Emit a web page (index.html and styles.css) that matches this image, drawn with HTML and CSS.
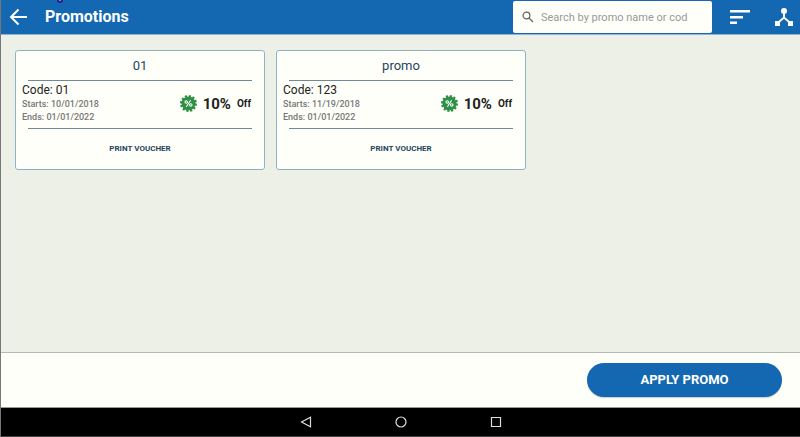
FILE: index.html
```html
<!DOCTYPE html>
<html lang="en">
<head>
    <meta charset="UTF-8">
    <meta name="viewport" content="width=device-width, initial-scale=1.0">
    <title>Promotions</title>
    <link rel="stylesheet" href="styles.css">
</head>
<body>
    <header class="topbar">
        <span class="marker"></span>
        <button class="icon-btn" type="button" aria-label="Back">
            <svg width="18" height="18" viewBox="0 0 18 18" fill="none" stroke="currentColor" stroke-width="2">
                <path d="M18 9H2M9.500 1.500L2 9l7.500 7.500"/>
            </svg>
        </button>
        <h1 class="title">Promotions</h1>
        <div class="search">
            <svg width="12" height="12" viewBox="0 0 12 12" fill="none" stroke="currentColor" stroke-width="1.300">
                <circle cx="4.500" cy="4.500" r="3.400"/>
                <path d="M7 7l4 4"/>
            </svg>
            <input type="text" aria-label="Search" placeholder="Search by promo name or code">
        </div>
        <button class="icon-btn sort" type="button" aria-label="Sort">
            <svg width="20" height="14" viewBox="0 0 20 14" fill="currentColor">
                <path d="M0 0h20v2.400H0zM0 6h13v2.400H0zM0 11.500h7v2.400H0z"/>
            </svg>
        </button>
        <button class="icon-btn" type="button" aria-label="Network">
            <svg width="18" height="18" viewBox="0 0 18 18" fill="currentColor">
                <circle cx="9" cy="3" r="3"/>
                <path d="M8 5h2v4.300l4.500 3.700H18v5h-5v-3.700L9 10.700l-4 3.600V18H0v-5h3.500L8 9.300z"/>
            </svg>
        </button>
    </header>

    <main class="promos">
        <article class="card">
            <h2 class="card-name">01</h2>
            <div class="card-body">
                <div class="info">
                    <p class="code">Code: 01</p>
                    <p>Starts: 10/01/2018</p>
                    <p>Ends: 01/01/2022</p>
                </div>
                <div class="discount">
                    <svg width="17" height="17" viewBox="0 0 24 24" fill="none">
                        <circle cx="12" cy="12" r="10" fill="#2f8f46"/>
                        <circle cx="12" cy="12" r="10.500" stroke="#2f8f46" stroke-width="3" stroke-dasharray="3.100 2.398"/>
                        <g stroke="#fff" stroke-width="1.500">
                            <circle cx="8.800" cy="9.800" r="1.800"/>
                            <circle cx="15.200" cy="14.200" r="1.800"/>
                            <path d="M15 7.500l-6 9"/>
                        </g>
                    </svg>
                    <span class="amount">10%</span>
                    <span class="off">Off</span>
                </div>
            </div>
            <button class="print" type="button">PRINT VOUCHER</button>
        </article>

        <article class="card">
            <h2 class="card-name">promo</h2>
            <div class="card-body">
                <div class="info">
                    <p class="code">Code: 123</p>
                    <p>Starts: 11/19/2018</p>
                    <p>Ends: 01/01/2022</p>
                </div>
                <div class="discount">
                    <svg width="17" height="17" viewBox="0 0 24 24" fill="none">
                        <circle cx="12" cy="12" r="10" fill="#2f8f46"/>
                        <circle cx="12" cy="12" r="10.500" stroke="#2f8f46" stroke-width="3" stroke-dasharray="3.100 2.398"/>
                        <g stroke="#fff" stroke-width="1.500">
                            <circle cx="8.800" cy="9.800" r="1.800"/>
                            <circle cx="15.200" cy="14.200" r="1.800"/>
                            <path d="M15 7.500l-6 9"/>
                        </g>
                    </svg>
                    <span class="amount">10%</span>
                    <span class="off">Off</span>
                </div>
            </div>
            <button class="print" type="button">PRINT VOUCHER</button>
        </article>
    </main>

    <footer class="actions">
        <button class="apply" type="button">APPLY PROMO</button>
    </footer>

    <nav class="navbar">
        <button class="icon-btn" type="button" aria-label="Previous">
            <svg width="12" height="12" viewBox="0 0 12 12" fill="none" stroke="currentColor" stroke-width="1.200">
                <path d="M10.500 1.200v9.600L1.500 6z"/>
            </svg>
        </button>
        <button class="icon-btn" type="button" aria-label="Home">
            <svg width="12" height="12" viewBox="0 0 12 12" fill="none" stroke="currentColor" stroke-width="1.200">
                <circle cx="6" cy="6" r="5"/>
            </svg>
        </button>
        <button class="icon-btn" type="button" aria-label="Recent apps">
            <svg width="12" height="12" viewBox="0 0 12 12" fill="none" stroke="currentColor" stroke-width="1.200">
                <path d="M1.500 1.500h9v9h-9z"/>
            </svg>
        </button>
    </nav>
</body>
</html>
```
FILE: styles.css
```css
* {
    box-sizing: border-box;
}

body {
    display: flex;
    flex-direction: column;
    min-height: 100vh;
    margin: 0;
    border-left: 1px solid #777;
    border-bottom: 1px solid #444;
    background-color: #ecf0e7;
    color: #222;
    font-family: Roboto, sans-serif;
}

h1, h2, p {
    margin: 0;
}

button {
    padding: 0;
    border: none;
    background: none;
    font-family: inherit;
    cursor: pointer;
}

.icon-btn {
    display: flex;
    color: inherit;
}

.topbar {
    position: relative;
    display: flex;
    align-items: center;
    padding: 1px 7px 1px 8px;
    background-color: #1368b1;
    border-bottom: 1px solid #8fb4d2;
    color: #fff;
}

.marker {
    position: absolute;
    top: -3px;
    left: 56px;
    width: 6px;
    height: 6px;
    border: 2px solid #30208a;
    border-radius: 3px;
    background-color: #a9a0ff;
}

.title {
    flex: 1;
    margin-left: 18px;
    font-size: 16px;
    line-height: 20px;
}

.search {
    display: flex;
    align-items: center;
    gap: 7px;
    width: 199px;
    height: 32px;
    padding: 0 24px 0 9px;
    border-radius: 2px;
    background-color: #fffff9;
    color: #666;
}

.search svg {
    flex: none;
}

.search input {
    flex: 1;
    min-width: 0;
    padding: 0;
    border: none;
    outline: none;
    background: none;
    font-family: inherit;
    font-size: 11px;
}

.search input::placeholder {
    color: #999;
}

.sort {
    margin: 0 25px 0 18px;
}

.promos {
    flex: 1;
    display: flex;
    flex-wrap: wrap;
    align-items: flex-start;
    gap: 11px;
    padding: 15px 14px;
}

.card {
    width: 250px;
    padding: 0 6px;
    border: 1px solid #8fb3c6;
    border-radius: 3px;
    background-color: #fffff9;
}

.card-name {
    margin: 0 6px;
    border-bottom: 1px solid #708898;
    color: #1f4560;
    font-size: 13px;
    font-weight: normal;
    line-height: 29px;
    text-align: center;
}

.card-body {
    display: flex;
    align-items: center;
    justify-content: space-between;
    padding: 2px 7px 4px 0;
}

.info {
    color: #777;
    font-size: 9px;
    font-weight: 500;
    line-height: 13px;
}

.info .code {
    color: #222;
    font-size: 12px;
    font-weight: normal;
    line-height: 15px;
}

.discount {
    display: flex;
    align-items: center;
    gap: 6px;
    font-weight: bold;
}

.amount {
    font-size: 15px;
}

.off {
    font-size: 10px;
}

.print {
    display: block;
    width: calc(100% - 12px);
    margin: 0 6px;
    border-top: 1px solid #708898;
    color: #1f4560;
    font-size: 8px;
    font-weight: bold;
    line-height: 40px;
}

.actions {
    display: flex;
    justify-content: flex-end;
    padding: 10px 18px;
    border-top: 1px solid #b4bab8;
    background-color: #fffff9;
}

.apply {
    width: 195px;
    border-radius: 17px;
    background-color: #1368b1;
    box-shadow: 0 1px 1px rgba(0, 0, 0, 0.2);
    color: #fff;
    font-size: 13px;
    font-weight: bold;
    line-height: 34px;
}

.navbar {
    display: flex;
    justify-content: center;
    gap: 83px;
    padding: 8px 0;
    border-top: 1px solid #999;
    background-color: #000;
    color: #ddd;
}
```
